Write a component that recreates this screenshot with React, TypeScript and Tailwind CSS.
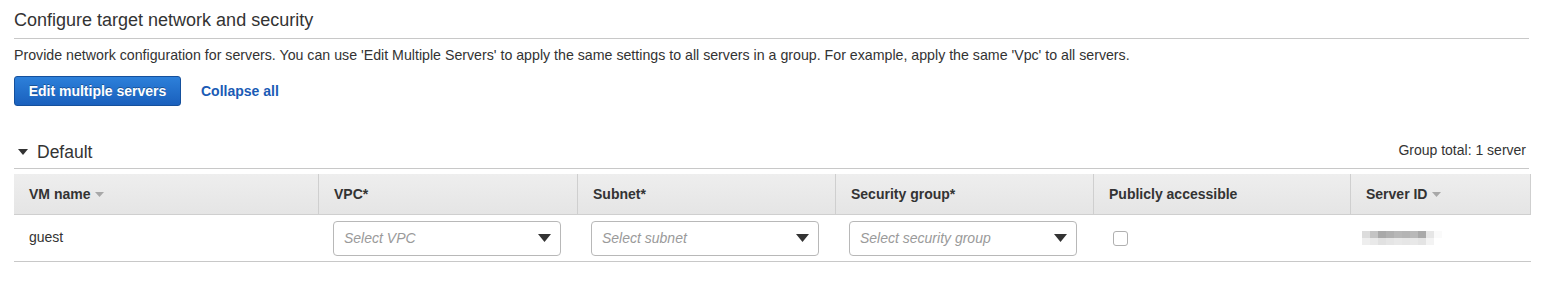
import React from "react";

const font = { fontFamily: '"Liberation Sans", Arial, Helvetica, sans-serif' };

function SortCaret() {
  return (
    <svg width="9" height="5" viewBox="0 0 9 5" className="ml-[5px] inline-block">
      <path d="M0 0 L9 0 L4.5 5 Z" fill="#a8a8a8" />
    </svg>
  );
}

function SelectBox({ placeholder }: { placeholder: string }) {
  return (
    <div className="flex h-[35px] w-[228px] items-center justify-between rounded-[4px] border border-[#b8b8b8] bg-white pl-[10px] pr-[9px]">
      <span className="text-[14px] italic leading-[16px] text-[#9a9a9a]">{placeholder}</span>
      <svg width="13" height="8" viewBox="0 0 13 8">
        <path d="M0 0 L13 0 L6.5 8 Z" fill="#333" />
      </svg>
    </div>
  );
}

const blurTop = ["#dcdcdc", "#c4c4c4", "#a9a9a9", "#b0b0b0", "#b7b7b7", "#b4b4b4", "#b9b9b9", "#a9a9a9", "#e6e6e6", "#fafafa"];
const blurBot = ["#eeeeee", "#e9e9e9", "#e1e1e1", "#e5e5e5", "#e8e8e8", "#e6e6e6", "#e8e8e8", "#e4e4e4", "#f3f3f3", "#ffffff"];

export default function App() {
  return (
    <div className="min-h-[304px] w-[1543px] bg-white px-[14px] text-[#333]" style={font}>
      <div className="border-b border-[#c8c8c8] pb-[7px] pt-[9px] text-[18px] leading-[22px] text-[#333]">
        Configure target network and security
      </div>
      <p className="mt-[8px] text-[14.2px] leading-[16px]">
        Provide network configuration for servers. You can use 'Edit Multiple Servers' to apply the same settings to all servers in a group. For example, apply the same 'Vpc' to all servers.
      </p>
      <div className="mt-[13px] flex h-[30px] items-center">
        <button
          className="h-[30px] w-[167px] rounded-[3px] border border-[#15509c] bg-gradient-to-b from-[#2d80da] to-[#1a60bd] text-[14px] font-bold leading-[16px] text-white"
          style={{ textShadow: "0 -1px 0 rgba(0,0,0,0.3)" }}
        >
          Edit multiple servers
        </button>
        <span className="ml-[20px] text-[14px] font-bold leading-[16px] text-[#1a5bb5]">Collapse all</span>
      </div>

      <div className="mt-[36px] flex h-[27px] items-start justify-between border-b border-[#c8c8c8]">
        <div className="flex h-[20px] items-center">
          <svg width="10" height="6" viewBox="0 0 10 6" className="ml-[4px] mr-[9px]">
            <path d="M0 0 L10 0 L5 6 Z" fill="#333" />
          </svg>
          <span className="text-[17.5px] leading-[20px]">Default</span>
        </div>
        <span className="mr-[3px] text-[14px] leading-[16px]">Group total: 1 server</span>
      </div>

      <div className="mt-[5px] w-[1517px]">
        <div className="grid h-[41px] grid-cols-[304px_259px_258px_258px_257px_181px] border-b border-r border-[#cfcfcf] bg-gradient-to-b from-[#eeeeee] to-[#e5e5e5] text-[14px] font-bold leading-[16px]">
          <div className="flex items-center pl-[15px]">
            VM name
            <SortCaret />
          </div>
          <div className="flex items-center border-l border-[#cfcfcf] pl-[15px]">VPC*</div>
          <div className="flex items-center border-l border-[#cfcfcf] pl-[15px]">Subnet*</div>
          <div className="flex items-center border-l border-[#cfcfcf] pl-[15px]">Security group*</div>
          <div className="flex items-center border-l border-[#cfcfcf] pl-[15px]">Publicly accessible</div>
          <div className="flex items-center border-l border-[#cfcfcf] pl-[15px]">
            Server ID
            <SortCaret />
          </div>
        </div>
        <div className="grid h-[47px] grid-cols-[304px_259px_258px_258px_257px_181px] items-center border-b border-[#c8c8c8] text-[14px] leading-[16px]">
          <div className="pb-[2px] pl-[15px]">guest</div>
          <div className="pl-[15px]">
            <SelectBox placeholder="Select VPC" />
          </div>
          <div className="pl-[14px]">
            <SelectBox placeholder="Select subnet" />
          </div>
          <div className="pl-[14px]">
            <SelectBox placeholder="Select security group" />
          </div>
          <div className="pl-[20px]">
            <div className="h-[15px] w-[15px] rounded-[3px] border border-[#b0b0b0] bg-white" />
          </div>
          <div className="pl-[12px]">
            <div className="flex flex-col">
              <div className="flex">
                {blurTop.map((c, i) => (
                  <div key={i} className="h-[7px] w-[8px]" style={{ background: c }} />
                ))}
              </div>
              <div className="flex">
                {blurBot.map((c, i) => (
                  <div key={i} className="h-[7px] w-[8px]" style={{ background: c }} />
                ))}
              </div>
            </div>
          </div>
        </div>
      </div>
    </div>
  );
}
